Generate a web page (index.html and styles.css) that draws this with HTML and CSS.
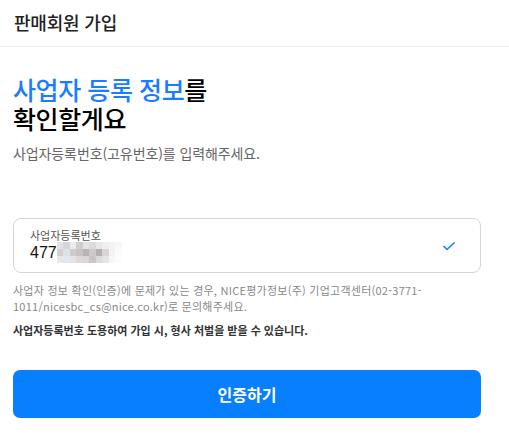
FILE: index.html
```html
<!DOCTYPE html>
<html lang="ko">
<head>
<meta charset="utf-8">
<link rel="stylesheet" href="styles.css">
</head>
<body>
<header class="topbar"><h1 class="topbar-title">판매회원 가입</h1></header>
<main class="content">
  <h2 class="headline"><span class="line"><span class="accent">사업자 등록 정보</span>를</span><span class="line">확인할게요</span></h2>
  <p class="sub">사업자등록번호(고유번호)를 입력해주세요.</p>
  <div class="field">
    <div class="field-body">
      <div class="field-label">사업자등록번호</div>
      <div class="field-value">477<span class="blur">
        <i style="background:#e2e2e4"></i><i style="background:#d6d4d6"></i><i style="background:#ebeaec"></i><i style="background:#d0cdcf"></i><i style="background:#e5e3e5"></i><i style="background:#dcdadc"></i><i style="background:#e8e7e9"></i><i style="background:#efeff1"></i><i style="background:#f3f3f5"></i><i style="background:#f7f7f8"></i>
        <i style="background:#d3cfcf"></i><i style="background:#dde2e8"></i><i style="background:#cfcbcb"></i><i style="background:#c8c4c6"></i><i style="background:#b9b3b5"></i><i style="background:#cdc9cb"></i><i style="background:#b5afb1"></i><i style="background:#d8d5d7"></i><i style="background:#f3f3f4"></i><i style="background:#fbfbfb"></i>
        <i style="background:#e9e8e9"></i><i style="background:#e3e8ee"></i><i style="background:#e5e3e4"></i><i style="background:#dcd9db"></i><i style="background:#d9d6d8"></i><i style="background:#c9c5c7"></i><i style="background:#dedbdd"></i><i style="background:#e6e4e6"></i><i style="background:#f7f7f8"></i><i style="background:#fdfdfd"></i>
      </span></div>
    </div>
    <svg class="check" width="14" height="10" viewBox="0 0 14 10"><path d="M1.5 5 L5 8.5 L12.5 1.5" fill="none" stroke="#1a7cff" stroke-width="1.6"/></svg>
  </div>
  <p class="note">사업자 정보 확인(인증)에 문제가 있는 경우, NICE평가정보(주) 기업고객센터(02-3771-1011/nicesbc_cs@nice.co.kr)로 문의해주세요.</p>
  <p class="warn">사업자등록번호 도용하여 가입 시, 형사 처벌을 받을 수 있습니다.</p>
  <button class="submit">인증하기</button>
</main>
</body>
</html>
```
FILE: styles.css
```css
* { box-sizing: border-box; }
body {
  margin: 0;
  background: #fff;
  font-family: "Noto Sans CJK KR", "Noto Sans", sans-serif;
  color: #111;
}
.topbar {
  height: 47px;
  border-bottom: 1px solid #eeeeee;
  display: flex;
  align-items: center;
  padding: 0 14px 2px;
}
.topbar-title {
  margin: 0;
  font-size: 18px;
  font-weight: 500;
  color: #222;
  letter-spacing: -0.2px;
}
.content {
  padding: 30px 28px 0 13px;
}
.headline {
  margin: 0;
  font-family: "Liberation Sans", "Noto Sans CJK KR", sans-serif;
  font-size: 25px;
  line-height: 29px;
  font-weight: 500;
  color: #000;
  letter-spacing: -0.4px;
}
.line { display: block; }
.accent { color: #1a7cff; }
.sub {
  margin: 9px 0 0;
  font-size: 14px;
  color: #666;
  line-height: 18px;
  letter-spacing: -0.1px;
}
.field {
  margin-top: 56px;
  height: 55px;
  border: 1px solid #d6d6d6;
  border-radius: 8px;
  display: flex;
  align-items: center;
  padding: 0 24px 0 16px;
}
.field-body { flex: 1; }
.field-label {
  font-size: 11px;
  line-height: 14px;
  color: #555;
}
.field-value {
  display: flex;
  align-items: center;
  font-size: 16px;
  line-height: 22px;
  color: #111;
  font-family: "Liberation Sans", "Noto Sans CJK KR", sans-serif;
}
.blur {
  display: grid;
  grid-template-columns: repeat(10, 6.5px);
  grid-auto-rows: 7px;
  width: 65px;
  height: 21px;
}
.blur i { display: block; }
.check { flex: none; }
.note {
  margin: 9px 0 0;
  font-size: 11px;
  line-height: 16px;
  color: #888;
  letter-spacing: 0.25px;
}
.warn {
  margin: 8px 0 0;
  font-size: 11px;
  line-height: 16px;
  font-weight: 700;
  color: #333;
}
.submit {
  margin-top: 32px;
  width: 100%;
  height: 48px;
  border: 0;
  border-radius: 7px;
  background: #077fff;
  color: #fff;
  font-family: inherit;
  font-size: 16px;
  font-weight: 700;
}
```
